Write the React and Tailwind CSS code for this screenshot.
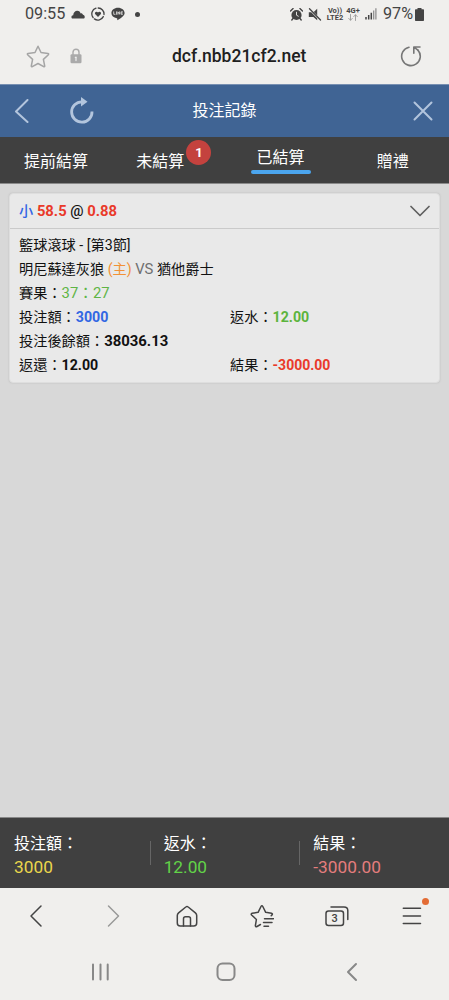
import React from 'react'

const tabs = [
  { label: '提前結算' },
  { label: '未結算', count: 1 },
  { label: '已結算', active: true },
  { label: '贈禮' },
]

const totals = [
  { label: '投注額：', value: '3000', color: 'text-[#ead64c]' },
  { label: '返水：', value: '12.00', color: 'text-[#62d348]' },
  { label: '結果：', value: '-3000.00', color: 'text-[#e47d7d]' },
]

/** Shared wrapper for the line icons */
function Icon({ className, box = '0 0 24 24', width = 1.5, children }) {
  return (
    <svg
      className={`block shrink-0 ${className}`}
      viewBox={box}
      fill="none"
      stroke="currentColor"
      strokeWidth={width}
      strokeLinecap="round"
      strokeLinejoin="round"
    >
      {children}
    </svg>
  )
}

function StatusBar() {
  return (
    <div className="flex h-7 items-center pl-[25px] text-[#444]">
      <span className="w-[46px] text-[16.2px] leading-7">09:55</span>
      <Icon className="h-[9px] w-[14px]" box="0 0 14 9">
        <path d="M1 8.5C-.2 7.4.5 5.2 2.2 5.3 2.4 2.2 4.4.7 6.3.8c1.9 0 3 1.3 3.3 2.6 1.2-.2 2 .4 2.3 1.4 1.8.2 2.5 2.6 1.2 3.7z" fill="currentColor" stroke="none" />
      </Icon>
      <Icon className="ml-[6px] h-[14px] w-[14px]" box="0 0 14 14" width={1.3}>
        <path d="M5 1.1A6 6 0 0 0 2.1 10.5M3.4 11.9A6 6 0 0 0 12.3 9.6M13 7.5A6 6 0 0 0 7.2 1" />
        <path d="M7 10 4.3 7.3C2.9 5.4 5.7 3.5 7 5.5 8.3 3.5 11.1 5.4 9.7 7.3z" fill="currentColor" stroke="none" />
      </Icon>
      <Icon className="ml-[6px] h-[14px] w-[14px]" box="0 0 14 14">
        <path d="M7 .8c-3.8 0-6.6 2.3-6.6 5.3 0 2.8 2.2 4.6 5.4 5.2.8.2.5.9.4 2 2.6-1.2 7.4-4 7.4-7.2C13.6 3.1 10.8.8 7 .8z" fill="currentColor" stroke="none" />
        <path d="M2.7 4.8v2.5h1.4M5.5 4.8v2.5M6.9 7.3V4.8l1.7 2.5V4.8M11.5 4.8h-1.4v2.5h1.4M10.1 6h1.2" stroke="#f0efed" strokeWidth=".75" />
      </Icon>
      <span className="ml-[10px] size-[5px] rounded-full bg-[#444]" />

      <Icon className="ml-[150px] h-[13px] w-[13px]" box="0 0 13 13">
        <path d="M.5 3 3.1.6M12.5 3 9.9.6M3 10.5 1.8 12M10 10.5l1.2 1.5" strokeWidth="1.4" />
        <circle cx="6.5" cy="7" r="5.1" fill="currentColor" stroke="none" />
        <path d="M6.5 4.2v3l1.8 1" stroke="#f0efed" strokeWidth=".9" />
      </Icon>
      <Icon className="ml-[5px] h-[13px] w-[14px]" box="0 0 14 13">
        <path d="M.8 4.3h2.4l6 6v2L5.4 8.900H.8zM9.2.8v6.600L5.800 4z" fill="currentColor" stroke="none" />
        <path d="m1.5.8 11 11.2" strokeWidth="1.3" />
      </Icon>
      <div className="ml-[4px] flex w-[18px] flex-col items-center text-[7.5px] font-bold">
        <span className="leading-[7px]">Vo))</span>
        <span className="leading-[7px]">LTE2</span>
      </div>
      <div className="ml-[2px] flex w-[14px] flex-col items-center">
        <span className="text-[7.5px] leading-[7px] font-bold">4G+</span>
        <Icon className="h-[7px] w-[10px] text-[#999]" box="0 0 10 7" width={0.9}>
          <path d="M2.5.5v5.7M.7 4.4l1.8 1.8 1.8-1.8M7.5 6.5V.8M5.7 2.6 7.5.8l1.8 1.8" />
        </Icon>
      </div>
      <Icon className="ml-[5px] h-[12px] w-[12px]" box="0 0 12 12">
        <path d="M1 9v2.5M3.7 7v4.5M6.3 4.7v6.8" strokeWidth="1.5" strokeLinecap="butt" />
        <path d="M8.7 2.4v9.1M10.9.3v11.2" stroke="#888" strokeWidth="1.2" strokeLinecap="butt" />
      </Icon>
      <span className="ml-[6px] w-[32px] text-[16.2px] leading-7">97%</span>
      <Icon className="h-[13px] w-[9px]" box="0 0 9 13">
        <path d="M2.5 1.3V0h4v1.3H8c.6 0 1 .4 1 1V12c0 .6-.4 1-1 1H1c-.6 0-1-.4-1-1V2.3c0-.6.4-1 1-1z" fill="currentColor" stroke="none" />
      </Icon>
    </div>
  )
}

function AddressBar() {
  return (
    <div className="flex h-14 items-center pl-[26px] text-[#777]">
      <Icon className="h-6 w-6 text-[#a5a5a5]">
        <path d="m12 2.2 3 6.3 6.9.9c.7.1 1 .8.5 1.3l-5 4.700 1.3 6.600c.1.6-.5 1-1 .7L12 19.500l-5.700 3.200c-.5.3-1.100-.1-1-.7l1.300-6.600-5-4.700c-.5-.5-.2-1.200.5-1.300l6.900-.9z" />
      </Icon>
      <Icon className="ml-5 h-4 w-[12px] text-[#aaa]" box="0 0 12 16">
        <path d="M3 7V4.200a3 3 0 0 1 6 0V7" strokeWidth="1.4" />
        <rect x=".5" y="6.2" width="11" height="9" rx="1.2" fill="currentColor" stroke="none" />
        <path d="M6 9v3.600M5.300 9.300h1" stroke="#eee" strokeWidth="1.2" />
      </Icon>
      <span className="ml-[90px] w-[228px] pt-px text-[17.5px] font-medium text-[#202020]">dcf.nbb21cf2.net</span>
      <Icon className="h-[22px] w-[22px]" box="0 0 22 22" width={1.6}>
        <path d="M9 2.200a9.300 9.300 0 1 0 8.900 2.900" />
        <path d="M20 2h-6.200v6.200M14 2.200l3.900 3" />
      </Icon>
    </div>
  )
}

function Header() {
  return (
    <header className="grid h-[53px] grid-cols-3 items-center border-t border-[#7890b2] bg-[#406494] text-[#b3c5dd]">
      <div className="flex items-center pl-[14px]">
        <Icon className="h-6 w-4" box="0 0 16 24" width={2}>
          <path d="M13.5 1 2 12.500 13.500 23" />
        </Icon>
        <Icon className="ml-[38px] h-7 w-[26px]" box="0 0 26 28" width={2.8}>
          <path d="M14 4.800A10.200 10.200 0 1 0 24 14.500" strokeLinecap="butt" />
          <path d="m13 0 6.500 4.700-6.500 4.700z" fill="currentColor" stroke="none" />
        </Icon>
      </div>
      <h1 className="text-center text-[16px] text-white">投注記錄</h1>
      <Icon className="mr-4 h-5 w-5 justify-self-end" box="0 0 20 20" width={2}>
        <path d="m1.5 1.500 17 17M18.500 1.500l-17 17" />
      </Icon>
    </header>
  )
}

function Tabs() {
  return (
    <nav className="grid h-[47px] grid-cols-4 border-b border-[#8a8a8a] bg-[#404040] text-[16px] leading-6 text-white">
      {tabs.map((tab) => (
        <div key={tab.label} className="flex flex-col items-center">
          <span className={`relative ${tab.active ? 'mt-[9px]' : 'mt-[13px]'} ${tab.count ? '-ml-4' : ''}`}>
            {tab.label}
            {tab.count && (
              <b className="absolute -top-[10px] left-[50px] flex size-[25px] items-center justify-center rounded-full bg-[#c4423e] text-[13px]">
                {tab.count}
              </b>
            )}
          </span>
          {tab.active && <span className="h-[4px] w-[60px] rounded-full bg-[#4ba5ee]" />}
        </div>
      ))}
    </nav>
  )
}

function BetCard() {
  return (
    <section className="mx-[9px] mt-[9px] h-[190px] rounded-[4px] border border-[#dedede] bg-[#e9e9e9] text-[14.2px] text-[#111] shadow-[0_0_2px_#bbb]">
      <div className="flex h-[35px] items-center justify-between border-b border-[#cacaca] px-[9px]">
        <div className="text-[14.8px] font-bold text-[#e93a29]">
          <span className="text-[14.2px] font-medium text-[#3265e4]">小</span> 58.5{' '}
          <span className="font-medium text-[#151515]">@</span> 0.88
        </div>
        <Icon className="h-3 w-5 text-[#606060]" box="0 0 20 12" width={1.7}>
          <path d="m1 1.500 9 9 9-9" />
        </Icon>
      </div>
      <div className="grid grid-cols-[211px_1fr] pt-[5px] pl-[9px] leading-[23.9px] whitespace-nowrap">
        <div className="col-span-2">籃球滾球 - [第3節]</div>
        <div className="col-span-2">
          明尼蘇達灰狼 <span className="text-[#f29136]">(主)</span> <span className="text-[14.8px] text-[#707070]">VS</span> 猶他爵士
        </div>
        <div className="col-span-2">
          賽果：<span className="text-[14.8px] text-[#5eb545]">37：27</span>
        </div>
        <div>投注額：<b className="text-[#3267e3]">3000</b></div>
        <div>返水：<b className="text-[#5cb43d]">12.00</b></div>
        <div className="col-span-2">投注後餘額：<b className="text-[14.9px]">38036.13</b></div>
        <div>返還：<b>12.00</b></div>
        <div>結果：<b className="text-[14px] text-[#e93a29]">-3000.00</b></div>
      </div>
    </section>
  )
}

function Summary() {
  return (
    <footer className="grid h-[71px] grid-cols-3 border-t border-[#888] bg-[#404040] pt-[13px]">
      {totals.map((item, i) => (
        <div key={item.label} className="flex">
          <span className={`mt-[10px] h-6 w-px ${i ? 'bg-[#666]' : ''}`} />
          <div className="ml-[13px]">
            <div className="pt-px text-[16px] leading-6 text-white">{item.label}</div>
            <div className={`-mt-px text-[17.3px] leading-6 ${item.color}`}>{item.value}</div>
          </div>
        </div>
      ))}
    </footer>
  )
}

function BrowserToolbar() {
  return (
    <div className="grid h-14 grid-cols-6 items-center justify-items-center text-[#444]">
      <Icon className="h-6 w-6">
        <path d="M16 2 6 12l10 10" />
      </Icon>
      <Icon className="h-6 w-6 text-[#999]">
        <path d="M8.500 2 18.500 12l-10 10" />
      </Icon>
      <Icon className="h-6 w-6">
        <path d="M10.800 3 3.600 8.900C2.700 9.700 2.300 10.500 2.300 11.500V19c0 2 1 3 3 3h13.400c2 0 3-1 3-3v-7.500c0-1-.4-1.800-1.300-2.600L13.200 3c-.8-.7-1.600-.7-2.400 0z" />
        <path d="M8.500 22v-7.200c0-1.300.7-2 2-2h3c1.300 0 2 .7 2 2V22" />
      </Icon>
      <Icon className="h-6 w-6">
        <path d="M7 22.500c-1 .5-1.800.1-1.600-1l1-6L1.600 11c-.7-.8-.4-1.500.5-1.700l6-1 2.900-5.800c.5-.9 1.300-.9 1.800 0L15.700 8.300l5.800 1c1 .2 1.200.9.5 1.600l-.8.8M7 22.500l3.500-2" />
        <path d="M14.500 14.700h9M13.500 18.600h8.500M14 22.300h4.500" />
      </Icon>
      <div className="relative">
        <Icon className="h-6 w-6">
          <rect x="1" y="7" width="17.500" height="14.500" rx="2.500" />
          <path d="M6 3h13c2.400 0 3.800 1.300 3.800 3.500V15.500" />
        </Icon>
        <span className="absolute top-[7px] left-[1px] w-[18px] text-center text-[11px] leading-[15px] font-medium">3</span>
      </div>
      <div className="relative">
        <Icon className="h-6 w-6">
          <path d="M3.300 4.200h17.200M3.300 11.900h17.200M3.300 19.500h17.200" />
        </Icon>
        <span className="absolute -top-[6px] left-[22px] size-[7px] rounded-full bg-[#e36c35]" />
      </div>
    </div>
  )
}

function SystemNav() {
  return (
    <div className="flex h-14 items-center pl-[91px] text-[#888]">
      <Icon className="h-5 w-[19px]" box="0 0 19 20" width={2}>
        <path d="M2 2.500v15M9.500 2.500v15M16.700 2.500v15" />
      </Icon>
      <Icon className="ml-[106px] h-5 w-5" box="0 0 20 20" width={2}>
        <rect x="1.500" y="1.500" width="17" height="16.500" rx="5" />
      </Icon>
      <Icon className="ml-[109px] h-5 w-[14px]" box="0 0 14 20" width={2}>
        <path d="M11 2 3 10l8 8" />
      </Icon>
    </div>
  )
}

export default function App() {
  return (
    <div className="flex h-[1000px] w-[449px] flex-col overflow-hidden bg-[#f0efed] font-[Roboto,'Noto_Sans_CJK_TC',sans-serif]">
      <StatusBar />
      <AddressBar />
      <Header />
      <Tabs />
      <main className="flex-1 bg-[#d8d8d8]">
        <BetCard />
      </main>
      <Summary />
      <BrowserToolbar />
      <SystemNav />
    </div>
  )
}
